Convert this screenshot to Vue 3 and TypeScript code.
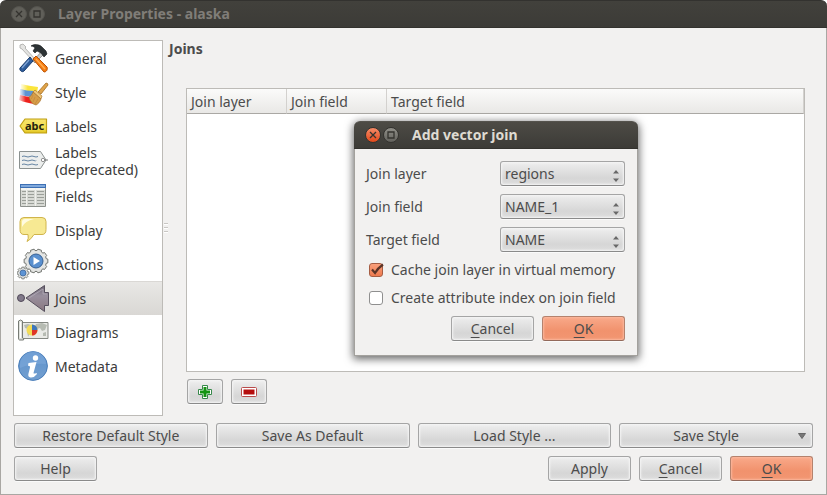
<script setup lang="ts">
import { ref } from 'vue'

interface Page {
  id: string
  label: string
}

const pages: Page[] = [
  { id: 'general', label: 'General' },
  { id: 'style', label: 'Style' },
  { id: 'labels', label: 'Labels' },
  { id: 'labels-old', label: 'Labels (deprecated)' },
  { id: 'fields', label: 'Fields' },
  { id: 'display', label: 'Display' },
  { id: 'actions', label: 'Actions' },
  { id: 'joins', label: 'Joins' },
  { id: 'diagrams', label: 'Diagrams' },
  { id: 'metadata', label: 'Metadata' },
]

const current = ref('joins')
const columns = ['Join layer', 'Join field', 'Target field']

const combos = ref([
  { id: 'join-layer', label: 'Join layer', value: 'regions' },
  { id: 'join-field', label: 'Join field', value: 'NAME_1' },
  { id: 'target-field', label: 'Target field', value: 'NAME' },
])

const cacheLayer = ref(true)
const createIndex = ref(false)

// Cog outline with the given number of teeth around a centre point
function cog(cx: number, cy: number, outer: number, inner: number, teeth: number): string {
  const points: string[] = []
  const step = (Math.PI * 2) / teeth
  for (let i = 0; i < teeth; i++) {
    const a = i * step
    const offsets: [number, number][] = [[-0.35, inner], [-0.25, outer], [0.25, outer], [0.35, inner]]
    for (const [o, r] of offsets) {
      const t = a + o * step
      points.push(`${(cx + r * Math.cos(t)).toFixed(2)},${(cy + r * Math.sin(t)).toFixed(2)}`)
    }
  }
  return points.join(' ')
}

const bigCog = cog(19, 13, 12, 10.5, 10)
const smallCog = cog(6, 25, 6, 4.8, 8)
</script>

<template>
  <div class="window">
    <header class="titlebar inactive">
      <button class="orb" type="button" aria-label="Close window">
        <svg viewBox="0 0 14 14"><path d="M4 4l6 6M10 4l-6 6" /></svg>
      </button>
      <button class="orb" type="button" aria-label="Maximize window">
        <svg viewBox="0 0 14 14"><path d="M4 4h6v6H4z" /></svg>
      </button>
      <h1>Layer Properties - alaska</h1>
    </header>

    <div class="content">
      <div class="split">
        <nav class="pages">
          <button
            v-for="page in pages"
            :key="page.id"
            type="button"
            class="page"
            :class="{ selected: page.id === current }"
            @click="current = page.id"
          >
            <svg v-if="page.id === 'general'" class="icon" viewBox="0 0 32 32">
              <path d="M3 3l3-1 3 3-1 1 10 11-2 2L5 7 3 6z" fill="#e4e4e2" stroke="#a8a8a6" stroke-width=".8" />
              <path d="M25 9l-9 10 2 2L27 12z" fill="#c9cbca" stroke="#777" stroke-width=".7" />
              <path d="M14 4c3-2 8-2 11 1l4 4 1 3-3 3-3-4-4-2-2 2-2-2 2-3c-1-1-2-2-4-2z" fill="#2d3335" stroke="#161a1b" stroke-width=".6" />
              <path d="M13 15l3 4L7 29c-2 2-5-1-4-3z" fill="#2f5d9b" stroke="#173a6c" />
              <path d="M12 18l-7 8" stroke="#80a4d4" stroke-width="1.4" />
              <path d="M16 17l3-3 11 11c1 3-1 5-3 5z" fill="#f57c11" stroke="#b95204" />
              <path d="M19 17l9 10" stroke="#ffae52" stroke-width="1.3" />
            </svg>

            <svg v-else-if="page.id === 'style'" class="icon" viewBox="0 0 32 32">
              <defs>
                <linearGradient id="fade-y"><stop offset="0" stop-color="#fdeb55" stop-opacity=".15" /><stop offset=".4" stop-color="#fbe53c" /></linearGradient>
                <linearGradient id="fade-b"><stop offset="0" stop-color="#5c93d2" stop-opacity=".15" /><stop offset=".4" stop-color="#5c93d2" /></linearGradient>
                <linearGradient id="fade-r"><stop offset="0" stop-color="#f02a24" stop-opacity=".2" /><stop offset=".4" stop-color="#ed211c" /></linearGradient>
              </defs>
              <path d="M4 8q8 2 17 3l-1 6Q10 15 4 14z" fill="url(#fade-y)" />
              <path d="M3 13q7 2 14 2l-2 6Q8 20 3 19z" fill="url(#fade-b)" />
              <path d="M3 19q7 2 12 2l4 7Q9 27 2 24z" fill="url(#fade-r)" />
              <path d="M21 16l8-9q2 0 2 2l-7 9z" fill="#e0a44a" stroke="#a56f22" stroke-width=".8" />
              <path d="M18 14l7 6-1 3-8-7z" fill="#efc77b" stroke="#b17b2d" stroke-width=".7" />
              <path d="M16 16l8 7c-1 3-3 5-5 6-4-1-6-4-7-8 2-1 3-2 4-5z" fill="#d79d48" stroke="#a6712b" stroke-width=".7" />
              <path d="M16 19c-1 2-1 3-2 4M18 21c-1 2-1 3-2 5M21 23c-1 2-2 3-3 5" stroke="#bd863c" stroke-width=".7" fill="none" />
            </svg>

            <svg v-else-if="page.id === 'labels'" class="icon" viewBox="0 0 32 32">
              <defs><linearGradient id="tag" x2="0" y2="1"><stop offset="0" stop-color="#f7e36b" /><stop offset=".7" stop-color="#f3df4d" /><stop offset="1" stop-color="#dfc01c" /></linearGradient></defs>
              <path d="M8 9h21.500v14H8l-5-7z" fill="url(#tag)" stroke="#bfa014" stroke-width="1.2" stroke-linejoin="round" />
              <text class="tag-text" x="8" y="20">abc</text>
            </svg>

            <svg v-else-if="page.id === 'labels-old'" class="icon" viewBox="0 0 32 32">
              <path d="M2.500 6.500h21l5.500 8.500-5.500 8.500h-21z" fill="#eceeed" stroke="#8b9190" />
              <circle cx="26" cy="15" r="1.700" fill="#fff" stroke="#777" stroke-width=".8" />
              <path d="M27.500 15h3.500" stroke="#777" />
              <path d="M5 11.500q2-1 4 0t4 0 4 0 4 0M5 15.500q2-1 4 0t4 0 4 0 2 0M5 19.500q2-1 4 0t4 0 4 0 4 0" fill="none" stroke="#6685a3" />
            </svg>

            <svg v-else-if="page.id === 'fields'" class="icon" viewBox="0 0 32 32">
              <path d="M3.500 4.500h25v22h-25z" fill="#d8dad5" stroke="#8d918c" />
              <path d="M3 4h26v4H3z" fill="#3d70b4" />
              <path d="M4 5h24v2H4z" fill="#80a9dc" />
              <path d="M4 8h24v2H4z" fill="#f4f5f2" />
              <path d="M9.500 8v18M18.500 8v18" stroke="#eff0ec" />
              <path d="M5 11.500h4M11 11.500h6M20 11.500h7M5 14.500h4M11 14.500h6M20 14.500h7M5 17.500h4M11 17.500h6M20 17.500h7M5 20.500h4M11 20.500h6M20 20.500h7M5 23.500h4M11 23.500h6M20 23.500h7" stroke="#9b9f99" />
            </svg>

            <svg v-else-if="page.id === 'display'" class="icon" viewBox="0 0 32 32">
              <path d="M7 3.500h18q4 0 4 4v8q0 5-4 5h-8q-3 5-7 7 2-3 1-7H7q-4 0-4-5v-8q0-4 4-4z" fill="#f7e993" stroke="#d0b44b" />
              <path d="M5 13V8q0-3 3-3h9Q8 7 5 13z" fill="#fffbe0" />
            </svg>

            <svg v-else-if="page.id === 'actions'" class="icon" viewBox="0 0 32 32">
              <polygon :points="bigCog" fill="#e4e5e3" stroke="#70736f" stroke-linejoin="round" />
              <circle cx="19" cy="13" r="7" fill="#5a90cf" stroke="#365f92" />
              <path d="M16.500 9l6.500 4-6.500 4z" fill="#fff" />
              <polygon :points="smallCog" fill="#dedfdd" stroke="#70736f" stroke-width=".8" stroke-linejoin="round" />
              <circle cx="6" cy="25" r="3" fill="#5d94d5" stroke="#365f92" stroke-width=".7" />
            </svg>

            <svg v-else-if="page.id === 'joins'" class="icon" viewBox="0 0 32 32">
              <defs><linearGradient id="join" x2="0" y2="1"><stop offset="0" stop-color="#6c6573" /><stop offset=".4" stop-color="#99909e" /><stop offset="1" stop-color="#89777f" /></linearGradient></defs>
              <circle cx="4" cy="16" r="3.500" fill="#81798a" stroke="#514959" />
              <path d="M9 16L27.500 3.500v7h4v13h-4v6z" fill="url(#join)" stroke="#57505e" stroke-linejoin="round" />
              <path d="M12 16l14-9v5h4" fill="none" stroke="#b2acb8" stroke-width=".8" />
            </svg>

            <svg v-else-if="page.id === 'diagrams'" class="icon" viewBox="0 0 32 32">
              <path d="M4 6.500h27v16H4z" fill="#e9eae6" stroke="#858983" />
              <path d="M7 9l4-1 3 1-3 4-3-1zM19 8l6-1 5 2-2 5-3 1-2-3-3 1-2-3zM26 17l3-1v4h-3zM10 15l3 2-2 4z" fill="#b6bbb2" />
              <path d="M1.500 5q2-2 4 0v17q2 0 1 2h-4q-1 0-1-2z" fill="#dfe1dc" stroke="#777b75" />
              <path d="M3.500 6v16" stroke="#fff" />
              <circle cx="15" cy="14" r="5.500" fill="#f3dc55" />
              <path d="M15 14V8.500a5.500 5.500 0 0 1 5.500 5.500z" fill="#3f77bb" />
              <path d="M15 14h5.500a5.500 5.500 0 0 1-5.500 5.500z" fill="#df3527" />
            </svg>

            <svg v-else class="icon" viewBox="0 0 32 32">
              <defs><linearGradient id="info" x2="0" y2="1"><stop offset="0" stop-color="#5d91cb" /><stop offset="1" stop-color="#739fd0" /></linearGradient></defs>
              <circle cx="16" cy="16" r="14.400" fill="url(#info)" stroke="#497db9" />
              <path d="M3 15a13 13 0 0 1 26-1Q16 13 3 18z" fill="#86b0df" opacity=".45" />
              <circle cx="18.500" cy="8" r="2.700" fill="#fff" />
              <path d="M11.500 13l8-1-3 11q0 1 3 0l.5 1q-3 4-6.500 3.500-3-.5-2-4l1.500-6q.5-2-2-1.800z" fill="#fff" />
            </svg>
            <span>{{ page.label }}</span>
          </button>
        </nav>

        <div class="splitter"><i></i><i></i><i></i></div>

        <section class="panel">
          <h2>Joins</h2>
          <div class="joins">
            <div class="table-frame">
              <table>
                <thead>
                  <tr><th v-for="column in columns" :key="column" scope="col">{{ column }}</th></tr>
                </thead>
              </table>
            </div>
            <div class="tools">
              <button class="btn tool" type="button" aria-label="Add join">
                <svg viewBox="0 0 16 16">
                  <path d="M5.500 1.500h5v4h4v5h-4v4h-5v-4h-4v-5h4z" fill="#fff" stroke="#37884a" stroke-linejoin="round" />
                  <path d="M6.500 3h3v3.500H13v3H9.500V13h-3V9.500H3v-3h3.500z" fill="#149412" />
                </svg>
              </button>
              <button class="btn tool" type="button" aria-label="Remove join">
                <svg viewBox="0 0 16 16">
                  <rect x=".5" y="3.500" width="15" height="9" rx="1" fill="#fff" stroke="#b94b4b" />
                  <path d="M2.500 5.500h11v5h-11z" fill="#b50d0d" />
                </svg>
              </button>
            </div>
          </div>
        </section>
      </div>

      <footer class="footer">
        <div class="quarters">
          <button class="btn" type="button">Restore Default Style</button>
          <button class="btn" type="button">Save As Default</button>
          <button class="btn" type="button">Load Style ...</button>
          <button class="btn menu" type="button">
            <span>Save Style</span>
            <svg viewBox="0 0 8 6"><path d="M.5.500h7L4 5.500z" /></svg>
          </button>
        </div>
        <div class="row">
          <button class="btn" type="button">Help</button>
          <span class="spacer"></span>
          <button class="btn" type="button">Apply</button>
          <button class="btn" type="button"><u>C</u>ancel</button>
          <button class="btn primary" type="button"><u>O</u>K</button>
        </div>
      </footer>
    </div>

    <div class="dialog" role="dialog" aria-labelledby="dialog-title">
      <header class="titlebar">
        <button class="orb close" type="button" aria-label="Close dialog">
          <svg viewBox="0 0 14 14"><path d="M4 4l6 6M10 4l-6 6" /></svg>
        </button>
        <button class="orb" type="button" aria-label="Maximize dialog">
          <svg viewBox="0 0 14 14"><path d="M4 4h6v6H4z" /></svg>
        </button>
        <h1 id="dialog-title">Add vector join</h1>
      </header>
      <form class="form" @submit.prevent>
        <div v-for="combo in combos" :key="combo.id" class="field">
          <label :for="combo.id">{{ combo.label }}</label>
          <div class="combo">
            <select :id="combo.id" v-model="combo.value">
              <option>{{ combo.value }}</option>
            </select>
            <svg viewBox="0 0 6 12"><path d="M0 3.500L3 0l3 3.500zM0 8.500h6L3 12z" /></svg>
          </div>
        </div>
        <label class="check"><input v-model="cacheLayer" type="checkbox" /><svg viewBox="0 0 18 18"><path d="M5 8.500L8 12Q11 7 16 3.500" /></svg><span>Cache join layer in virtual memory</span></label>
        <label class="check"><input v-model="createIndex" type="checkbox" /><svg viewBox="0 0 18 18"><path d="M5 8.500L8 12Q11 7 16 3.500" /></svg><span>Create attribute index on join field</span></label>
        <div class="row end">
          <button class="btn" type="button"><u>C</u>ancel</button>
          <button class="btn primary" type="submit"><u>O</u>K</button>
        </div>
      </form>
    </div>
  </div>
</template>

<style>
body {
  background: #fff;
}
</style>

<style scoped>
.window,
.window * {
  box-sizing: border-box;
}

.window {
  position: relative;
  display: flex;
  flex-direction: column;
  min-height: 100vh;
  background: #f2f1f0;
  border-radius: 6px 6px 0 0;
  font: 14px/20px "Noto Sans", "Open Sans", sans-serif;
  color: #4c4c4c;
}

button,
select {
  font: inherit;
  color: inherit;
}

.titlebar {
  display: flex;
  align-items: center;
  gap: 2px;
  height: 28px;
  padding: 0 11px;
  border-bottom: 1px solid #33322e;
  border-top: 1px solid #55534d;
  border-radius: 6px 6px 0 0;
  background: linear-gradient(#4d4b45, #3c3b37);
  color: #dfdbd2;
}

.titlebar.inactive {
  border-top-color: #33322f;
  background: linear-gradient(#42413c, #3c3b37);
  color: #807d78;
}

.titlebar h1 {
  margin: 0 0 0 11px;
  font-size: 14px;
  line-height: 20px;
  font-weight: 700;
}

.orb {
  width: 16px;
  height: 16px;
  padding: 0;
  border: 1px solid #34332f;
  border-radius: 50%;
  background: linear-gradient(#908f88, #62615c);
}

.inactive .orb {
  background: #605f59;
  border-color: #54534e;
}

.orb.close {
  background: linear-gradient(#f58b67, #e3491a);
}

.orb svg {
  display: block;
  width: 14px;
  height: 14px;
  fill: none;
  stroke: #34332f;
  stroke-width: 1.3;
}

.content {
  flex: 1;
  display: flex;
  flex-direction: column;
  gap: 7px;
  padding: 12px 12px 13px;
  border: 1px solid #a9a7a3;
  border-top: 0;
}

.split {
  flex: 1;
  display: flex;
}

.pages {
  display: flex;
  flex-direction: column;
  width: 150px;
  border: 1px solid #bdbbb7;
  background: #fff;
}

.page {
  display: flex;
  align-items: center;
  gap: 6px;
  min-height: 34px;
  padding: 1px 3px;
  border: 0;
  background: none;
  color: #3c3c3c;
  line-height: 17px;
  text-align: left;
}

.page.selected {
  background: linear-gradient(#e9e8e6, #d9d7d4);
  box-shadow: inset 0 1px #dad8d5;
}

.icon {
  flex: none;
  width: 32px;
  height: 32px;
}

.tag-text {
  font: 700 11px "Noto Sans", sans-serif;
  fill: #25240f;
}

.splitter {
  display: flex;
  flex-direction: column;
  justify-content: center;
  align-items: center;
  gap: 2px;
  width: 6px;
}

.splitter i {
  width: 4px;
  height: 2px;
  border-top: 1px solid #c9c7c4;
  border-bottom: 1px solid #fff;
}

.panel {
  flex: 1;
  display: flex;
  flex-direction: column;
}

.panel h2 {
  margin: 0;
  font-size: 14px;
  line-height: 18px;
  font-weight: 700;
}

.joins {
  flex: 1;
  display: flex;
  flex-direction: column;
  gap: 7px;
  padding: 30px 9px 12px 17px;
}

.table-frame {
  flex: 1;
  border: 1px solid #bdbbb7;
  background: #fff;
}

table {
  width: 100%;
  table-layout: fixed;
  border-collapse: separate;
  border-spacing: 0;
}

th {
  height: 25px;
  padding: 1px 4px 0;
  border-right: 1px solid #d3d1ce;
  border-bottom: 1px solid #aaa8a4;
  background: linear-gradient(#fbfbfa, #e9e8e6);
  font-weight: 400;
  text-align: left;
}

th:nth-child(-n + 2) {
  width: 100px;
}

.tools {
  display: flex;
  gap: 8px;
  padding-left: 1px;
}

.footer {
  display: flex;
  flex-direction: column;
  gap: 8px;
  padding: 0 1px;
}

.quarters {
  display: grid;
  grid-template-columns: repeat(4, 1fr);
  gap: 8px;
}

.quarters .btn {
  width: auto;
}

.row {
  display: flex;
  gap: 8px;
}

.row.end {
  justify-content: flex-end;
}

.spacer {
  flex: 1;
}

.btn {
  width: 83px;
  height: 25px;
  padding: 0;
  border: 1px solid #a5a5a5;
  border-bottom-color: #8a8a8a;
  border-radius: 3px;
  background: linear-gradient(#eeeeee, #d6d6d6 70%, #dddddd);
  box-shadow: inset 0 0 2px 1px #f5f5f5, 0 1px #fafafa;
  line-height: 22px;
}

.btn.tool {
  display: flex;
  align-items: center;
  justify-content: center;
  width: 36px;
}

.tool svg {
  width: 16px;
  height: 16px;
}

.btn.primary {
  border-color: #b5826d;
  border-bottom-color: #93695a;
  background: linear-gradient(#f9a98a, #f1926d 60%, #f29672);
  box-shadow: inset 0 0 2px 1px #fbb79d, 0 1px #fafafa;
}

.btn u {
  text-decoration-thickness: 1px;
  text-underline-offset: 3px;
}

.btn.menu {
  display: flex;
  align-items: center;
  padding: 0 6px 0 0;
}

.menu span {
  flex: 1;
  padding-right: 6px;
}

.menu svg {
  width: 8px;
  height: 6px;
  fill: #777;
  stroke: #666;
}

.dialog {
  position: absolute;
  left: 354px;
  top: 121px;
  width: 284px;
  border-radius: 6px 6px 0 0;
  background: #f2f1f0;
  box-shadow: 0 2px 8px 1px rgba(0, 0, 0, 0.6);
}

.form {
  display: flex;
  flex-direction: column;
  gap: 8px;
  padding: 12px 12px 14px 11px;
  border: 1px solid #a3a19d;
  border-top: 0;
}

.field {
  display: flex;
  align-items: center;
  justify-content: space-between;
}

.combo {
  position: relative;
  width: 125px;
  height: 25px;
}

.combo select {
  display: block;
  width: 100%;
  height: 25px;
  padding: 0 20px 0 4px;
  border: 1px solid #a5a5a5;
  border-bottom-color: #8a8a8a;
  border-radius: 3px;
  appearance: none;
  background: linear-gradient(#eeeeee, #d6d6d6 70%, #dddddd);
  box-shadow: inset 0 0 2px 1px #f5f5f5, 0 1px #fafafa;
}

.combo svg {
  position: absolute;
  right: 6px;
  top: 9px;
  width: 6px;
  height: 12px;
  fill: #686868;
  pointer-events: none;
}

.check {
  position: relative;
  display: flex;
  align-items: center;
  gap: 8px;
  height: 20px;
  padding-left: 3px;
  white-space: nowrap;
}

.check input {
  width: 14px;
  height: 14px;
  margin: 0;
  border: 1px solid #8f8f8f;
  border-radius: 3px;
  appearance: none;
  background: #fff;
}

.check input:checked {
  border-color: #a65d43;
  background: linear-gradient(#f9a07c, #ee7a4e);
}

.check svg {
  display: none;
  position: absolute;
  left: 1px;
  top: 1px;
  width: 18px;
  height: 18px;
  fill: none;
  stroke: #5b3427;
  stroke-width: 2.2;
}

.check input:checked + svg {
  display: block;
}
</style>
